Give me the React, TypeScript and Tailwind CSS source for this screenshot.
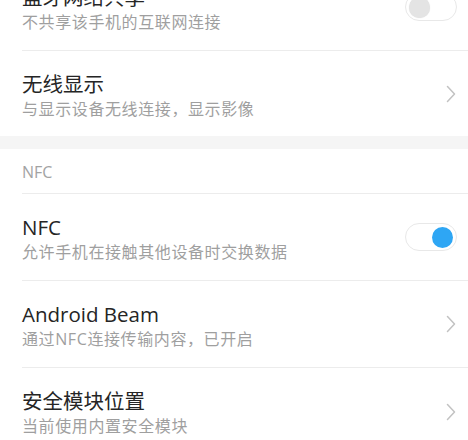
const Chevron = () => (
  <svg width="12" height="18" viewBox="0 0 12 18" fill="none" className="shrink-0">
    <path d="M2.5 1.5 L9.5 9 L2.5 16.5" stroke="#c2c2c2" strokeWidth="1.5" strokeLinecap="round" strokeLinejoin="round" />
  </svg>
);

const Toggle = ({ on }: { on: boolean }) => (
  <div
    className={`w-[52px] h-[28px] rounded-full border border-[#e8e8e8] bg-white flex items-center px-[3px] shrink-0 ${
      on ? "justify-end" : "justify-start"
    }`}
  >
    <div
      className={`w-[21px] h-[21px] rounded-full ${
        on ? "bg-[#2ea6f4]" : "bg-[#e4e4e4] shadow-[0_0_1px_rgba(0,0,0,0.15)]"
      }`}
    />
  </div>
);

type RowProps = {
  title: string;
  sub: string;
  right: React.ReactNode;
  border?: boolean;
  h?: string;
};

const Row = ({ title, sub, right, border = true, h = "h-[87px]" }: RowProps) => (
  <div className={`ml-[22px] ${h} ${border ? "border-b border-[#ececec]" : ""}`}>
    <div className="flex items-center h-full pr-[11px]">
      <div className="flex-1 self-start pt-[21px]">
        <div className="text-[20.5px] leading-[25px] text-[#252525]">{title}</div>
        <div className="text-[16px] leading-[24px] tracking-[0.6px] text-[#9f9f9f]">{sub}</div>
      </div>
      {right}
    </div>
  </div>
);

export default function App() {
  return (
    <div
      className="w-[468px] h-[440px] overflow-hidden bg-white"
      style={{ fontFamily: '"Open Sans", "Noto Sans CJK SC", sans-serif' }}
    >
      <div className="-mt-[36px]">
        <Row title="蓝牙网络共享" sub="不共享该手机的互联网连接" right={<Toggle on={false} />} />
        <Row title="无线显示" sub="与显示设备无线连接，显示影像" right={<Chevron />} border={false} h="h-[85px]" />

        <div className="h-[13px] bg-[#f5f5f5]" />

        <div className="ml-[22px] h-[45px] border-b border-[#ececec] flex items-center pt-[2px]">
          <span className="text-[16px] text-[#a3a3a3]">NFC</span>
        </div>

        <Row title="NFC" sub="允许手机在接触其他设备时交换数据" right={<Toggle on />} />
        <Row title="Android Beam" sub="通过NFC连接传输内容，已开启" right={<Chevron />} />
        <Row title="安全模块位置" sub="当前使用内置安全模块" right={<Chevron />} border={false} />
      </div>
    </div>
  );
}
